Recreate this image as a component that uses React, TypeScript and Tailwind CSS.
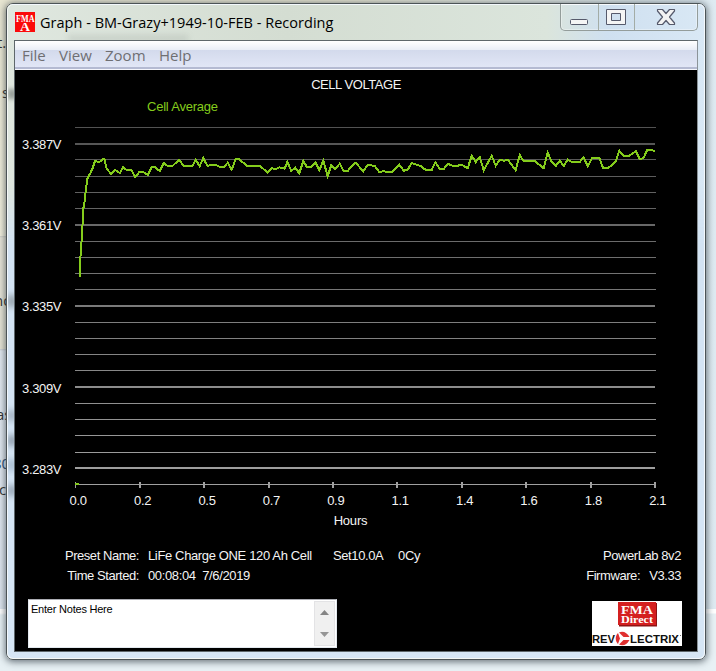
// The trace shares its coordinates with the chart's viewBox
const trace = `
78.5,276 80,276 80.3,259 81.5,242 82.5,225 83.3,208.7 84.7,200.5 86,188 87.5,178.5 90.7,172.5 92.7,168 95,161
99.3,162 102.7,159.3 104.5,159.5 106.7,169 111.3,174 115,170 120,173 123,167.3 126.7,170 131.3,170 135.3,177
139.3,172 143.3,172 147.7,175 151.7,167.3 155,167.3 159.7,171 163.7,163 167.3,165.7 172.7,165.7 179,160 184,166
192.3,166 195.7,160 199.7,166 203.3,158 207.3,165.7 215.3,164.7 220,167 224,167 227.7,162.7 231.7,169.7
235.7,158.7 239.3,159.3 246.7,165.7 260,166 267.3,172.3 271.3,168.3 276,169 279.3,167.3 284.7,168.7 287.3,161.7
291.3,171 295.3,167.7 299.3,173.3 303.3,161 307,167.3 310.3,167.3 315.3,162.3 319.3,170.3 323.3,160.7
327.7,176.3 331.3,165 335.3,169 339.7,163.7 343.7,171 347.7,171 351.3,166.3 355.7,162.7 363.3,171.3 367.7,164.7
374.7,166 379.3,172 383.7,171.3 391.7,172.3 399.3,164.7 403.7,170.7 407.7,169.7 411.7,163 420.7,166 424,169
427.7,170.3 431.7,170 435.3,162.3 439.7,169 443.7,169 447.7,163.7 453.3,166 456.7,166 461.7,164.7 467.7,168.3
471.7,155.7 475.7,162 479.7,157 483.7,170.3 491.7,155.7 495.7,165.7 499.7,160 504,160.7 507.7,159.7 515.7,170.3
519.7,155 523.3,160.7 534.3,160.7 543.7,168.3 547.7,152.7 551.7,162 555.7,166 559.7,160.7 563.7,166 567.7,159.7
571.7,162 579.7,162 583.7,157.3 587.7,166.3 592,158.3 599.3,158 603,168 608.3,168 615.7,161.7 619.3,150.7
624,156 629,156 636,151 639.7,159 643.3,158.3 647.3,150 655,150.7`;

const voltageLabels = ["3.387V", "3.361V", "3.335V", "3.309V", "3.283V"];
const hourLabels = ["0.0", "0.2", "0.5", "0.7", "0.9", "1.1", "1.4", "1.6", "1.8", "2.1"];

const minorLines = [
  127, 159, 176, 192, 208, 241, 257, 273, 289, 322, 338, 354, 370, 403, 419, 435, 452,
];
const majorLines = [143, 224, 305, 386, 467];

// Grid lines get lighter towards the bottom
function gridColor(y: number) {
  const v = Math.round(82 + ((y - 127) / 340) * 76);
  return `rgb(${v},${v},${v})`;
}

function Chart() {
  return (
    <svg width="582" height="370" viewBox="75 120 582 370" className="block shrink-0">
      <g shapeRendering="crispEdges">
        {minorLines.map((y) => (
          <rect key={y} x="75" y={y} width="581" height="1" fill={gridColor(y)} />
        ))}
        {majorLines.map((y) => (
          <rect key={y} x="75" y={y} width="580" height="2" fill={gridColor(y)} />
        ))}
        <rect x="75" y="484" width="580" height="1" fill="#a0a0a0" />
        {hourLabels.map((h, i) => (
          <rect key={h} x={Math.round(74.4 + i * 64.4)} y="482" width="2" height="6" fill="#a0a0a0" />
        ))}
        <rect x="75" y="483" width="4" height="2" fill="#84c81e" />
        <polyline points={trace} fill="none" stroke="#84cc1c" strokeWidth="2" />
      </g>
    </svg>
  );
}

function AppIcon() {
  return (
    <svg width="20" height="20" viewBox="0 0 20 20" className="shrink-0">
      <rect width="20" height="20" fill="#fb0a0a" />
      <g fill="#fff" fontFamily="'Liberation Serif', serif" fontWeight="bold" fontSize="11">
        <text x="1" y="9.5" textLength="18.5" lengthAdjust="spacingAndGlyphs">FMA</text>
        <text x="5" y="18.5" fontSize="12" textLength="10" lengthAdjust="spacingAndGlyphs">A</text>
      </g>
    </svg>
  );
}

function CaptionButtons() {
  return (
    <div className="flex h-[27px] w-[138px] rounded-b-[5px] border border-t-0 border-[#949d9b] shadow-[inset_0_0_0_1px_rgba(255,255,255,0.35)]">
      <div className="w-[38px] border-r border-[#a3aca6]">
        <svg width="37" height="26">
          <rect x="9.5" y="15.5" width="17" height="5" rx="1" fill="#f5f5f5" stroke="#565a6c" />
        </svg>
      </div>
      <div className="w-[36px] border-r border-[#a3aca6]">
        <svg width="35" height="26">
          <path
            d="M7.5 5.5h19v15h-19zM12.5 9.5v7h9v-7z"
            fill="#f5f5f5"
            fillRule="evenodd"
            stroke="#565a6c"
            strokeLinejoin="round"
          />
        </svg>
      </div>
      <svg width="62" height="26">
        <path
          d="M22.5 5.5h5l3.5 4 3.5-4h5v1.5l-5 6 5 6v1.5h-5l-3.5-4-3.5 4h-5v-1.5l5-6-5-6z"
          fill="#f3f3f3"
          stroke="#565a6c"
          strokeWidth="1.2"
          strokeLinejoin="round"
        />
      </svg>
    </div>
  );
}

function TitleBar() {
  return (
    <div className="-mt-px flex h-[36px] justify-between pl-px">
      <div className="flex items-start gap-[5px] pt-[8px]">
        <AppIcon />
        <span className="whitespace-nowrap font-['Open_Sans',sans-serif] text-[14.5px] leading-[22px] tracking-[0.02px] text-black">
          Graph - BM-Grazy+1949-10-FEB - Recording
        </span>
      </div>
      <CaptionButtons />
    </div>
  );
}

function MenuBar() {
  return (
    <div className="flex h-[29px] gap-[14px] border-b border-[#f4f5fb] bg-[linear-gradient(#ffffff_0px,#e9edf6_9px,#d3daec_9px,#e1e6f6_26px,#b4bad2_26px,#b4bad2_28px)] pl-[7px] font-['Open_Sans',sans-serif] text-[15px] leading-[29px] text-[#6f6f73]">
      <span className="w-[23px]">File</span>
      <span className="w-[32px]">View</span>
      <span className="w-[40px]">Zoom</span>
      <span>Help</span>
    </div>
  );
}

function Readout() {
  return (
    <div className="flex h-[581px] flex-col pt-[5px] text-[13px] leading-[20px] text-[#f4f4f4]">
      <div className="text-center tracking-[-0.45px]">CELL VOLTAGE</div>
      <div className="mt-[2px] h-[23px] pl-[132px] tracking-[-0.22px] text-[#84cc1c]">Cell Average</div>
      <div className="flex h-[370px]">
        <div className="flex w-[60px] flex-col gap-[61.2px] pl-[7px] pt-[15px] tracking-[-0.35px]">
          {voltageLabels.map((label) => (
            <span key={label}>{label}</span>
          ))}
        </div>
        <Chart />
      </div>
      <div className="mt-px flex h-[20px] pl-[31px] tracking-[-0.3px]">
        {hourLabels.map((label) => (
          <span key={label} className="w-[64.4px] shrink-0 text-center">
            {label}
          </span>
        ))}
      </div>
      <div className="h-[19px] pr-[11px] text-center tracking-[-0.2px]">Hours</div>
      <div className="mt-[16px] flex justify-between pr-[16px]">
        <div className="flex whitespace-pre">
          <div className="w-[124px] text-right tracking-[-0.45px]">
            <div>Preset Name:</div>
            <div>Time Started:</div>
          </div>
          <div className="w-[185px] pl-[9px] tracking-[-0.36px]">
            <div>LiFe Charge ONE 120 Ah Cell</div>
            <div>00:08:04  7/6/2019</div>
          </div>
          <div className="w-[65px] pl-[9px] tracking-[-0.4px]">Set10.0A</div>
          <div className="pl-[9px] tracking-[-0.3px]">0Cy</div>
        </div>
        <div className="whitespace-pre text-right tracking-[-0.42px]">
          <div>PowerLab 8v2</div>
          <div className="flex justify-end gap-[9px]">
            <span>Firmware:</span>
            <span>V3.33</span>
          </div>
        </div>
      </div>
      <div className="mt-[13px] flex justify-between pl-[13px] pr-[15px]">
        <NotesBox />
        <div className="pt-[2px]">
          <Logo />
        </div>
      </div>
    </div>
  );
}

function NotesBox() {
  return (
    <div className="flex h-[49px] w-[309px] justify-between border border-[#e3e9ef] border-t-[#abadb3] bg-white p-px">
      <span className="pl-px text-[11px] leading-[17px] tracking-[-0.22px] text-black">
        Enter Notes Here
      </span>
      <div className="flex w-[21px] flex-col items-center justify-between border border-[#e3e3e5] bg-[#f0f0f0] py-[8px]">
        <svg width="9" height="5">
          <path d="M4.5 0 9 5H0z" fill="#858585" />
        </svg>
        <svg width="9" height="5">
          <path d="M0 0h9L4.5 5z" fill="#959595" />
        </svg>
      </div>
    </div>
  );
}

function Logo() {
  return (
    <svg width="90" height="45" viewBox="0 0 90 45" className="shrink-0">
      <rect width="90" height="45" fill="#fff" />
      <rect x="27" y="2" width="38" height="23.5" fill="#8f1414" />
      <rect x="26" y="1" width="38" height="23" fill="#d42020" />
      <g fontFamily="'Liberation Serif', serif" fontWeight="bold" fill="#fff">
        <text x="29" y="12.5" fontSize="13" textLength="32" lengthAdjust="spacingAndGlyphs">FMA</text>
        <text x="29" y="21.5" fontSize="10" textLength="32" lengthAdjust="spacingAndGlyphs">Direct</text>
      </g>
      <g fontFamily="'Liberation Sans', Arial, sans-serif" fontWeight="bold" fontSize="10.5" fill="#111">
        <text x="0" y="41.5" textLength="23" lengthAdjust="spacingAndGlyphs">REV</text>
        <text x="38" y="41.5" textLength="49" lengthAdjust="spacingAndGlyphs">LECTRIX</text>
      </g>
      {/* red rotor standing in for the O */}
      <path d="M26 32C23 35 23 40 26 43L28 37.5z" fill="#e03030" />
      <path d="M27 31.5C31 29.5 35 31.5 37.5 36L31.5 36z" fill="#e03030" />
      <path d="M27 43.5C31 45.5 35 43.5 37.5 39L31.5 39z" fill="#e03030" />
      <path d="M88.5 34v1" stroke="#777" />
    </svg>
  );
}

// Pieces of the page under the window that show past its left edge
function Backdrop() {
  return (
    <div className="absolute inset-0 flex justify-between bg-[linear-gradient(90deg,#e6e4d2_0_330px,#d9e4e9_650px,#dfebf2)] font-['Open_Sans',sans-serif] text-[15px] text-[#333]">
      <div className="relative w-[30px] overflow-hidden bg-[linear-gradient(#e8e6d2_0px,#f0eedc_236px,#cfcfc8_236px,#e6e4d8_238px,#e6e4d5_349px,#c9ccd0_349px,#e2e9f0_351px,#dde5ee_609px,#fff_609px,#fff_613px,#e7f0f4_615px)]">
        <span className="absolute left-[-3px] top-[31px]">t.</span>
        <span className="absolute left-[2px] top-[81px]">s</span>
        <span className="absolute left-[-6px] top-[289px]">nd</span>
        <span className="absolute left-[-4px] top-[403px]">as</span>
        <span className="absolute left-[-7px] top-[452px] text-[#2c4f77]">80</span>
        <span className="absolute left-[-1px] top-[478px]">c</span>
      </div>
      <div className="flex flex-1 flex-col justify-end">
        <div className="h-[62px] bg-[linear-gradient(#fff_0_4px,#e8f1f5_5px)]" />
      </div>
    </div>
  );
}

// Backdrop text blurred by the glass frame
function GlassSmudges() {
  return (
    <div className="absolute inset-0 overflow-hidden rounded-[6px]">
      <div className="absolute left-[60px] top-[31px] h-[5px] w-[120px] bg-[#5c665f]/20 blur-[3px]" />
      <div className="absolute left-0 top-[84px] h-[10px] w-[8px] bg-[#3d4543]/45 blur-[2px]" />
      <div className="absolute left-0 top-[290px] h-[12px] w-[8px] bg-[#3d4543]/45 blur-[3px]" />
      <div className="absolute left-0 top-[405px] h-[11px] w-[8px] bg-[#3d4a58]/35 blur-[3px]" />
      <div className="absolute left-0 top-[430px] h-[11px] w-[8px] bg-[#3d4a58]/50 blur-[3px]" />
      <div className="absolute left-0 top-[454px] h-[12px] w-[8px] bg-[#3d5a78]/30 blur-[3px]" />
      <div className="absolute left-0 top-[480px] h-[11px] w-[8px] bg-[#3d4a58]/45 blur-[3px]" />
    </div>
  );
}

export default function App() {
  return (
    <div className="relative h-[671px] w-[716px] overflow-hidden font-['Liberation_Sans',Arial,sans-serif]">
      <Backdrop />
      <div className="relative flex h-full pb-[11px] pl-[6px] pr-[10px] pt-[3px]">
        <div className="flex-1 rounded-[7px] border border-[#4c5457] bg-[linear-gradient(90deg,#dfe7df_0,#d4ddd2_280px,#dbe5dc_540px,#cfe0f0_600px,#d9e8f5)] shadow-[0_1px_7px_1px_rgba(40,50,60,0.65)]">
          <div className="relative h-full rounded-[6px] border border-white/70 bg-[linear-gradient(transparent_180px,#d3e3f3_240px,#d6e6f5)]">
            <GlassSmudges />
            <div className="relative pl-[6px] pr-[6px]">
              <TitleBar />
              <div className="border border-[#5e676b] border-r-[#8b9398] bg-black">
                <MenuBar />
                <Readout />
              </div>
            </div>
          </div>
        </div>
      </div>
    </div>
  );
}
